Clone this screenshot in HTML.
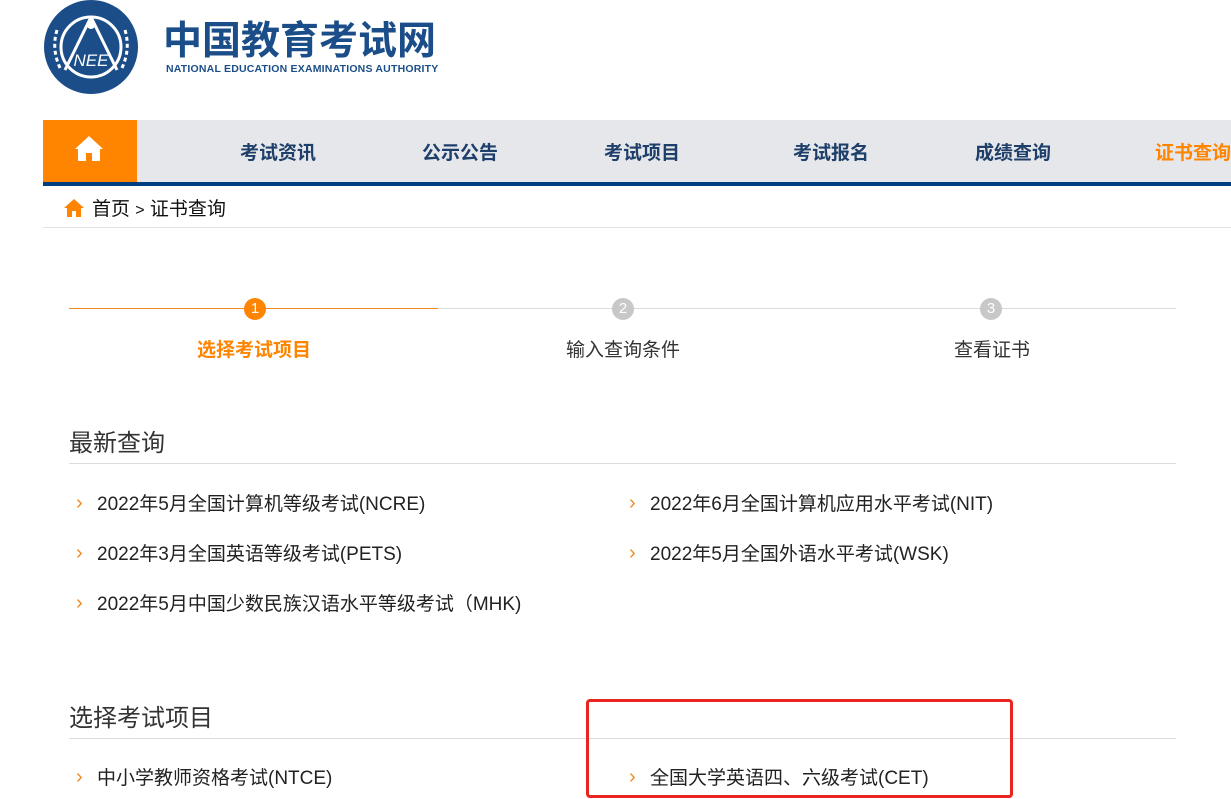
<!DOCTYPE html>
<html><head><meta charset="utf-8"><style>
*{margin:0;padding:0;box-sizing:border-box}
body{width:1231px;height:799px;overflow:hidden;background:#fff;font-family:"Liberation Sans","Noto Sans CJK SC",sans-serif;position:relative;color:#222}
.a{position:absolute;white-space:nowrap}
.nav{position:absolute;left:43px;top:120px;width:1188px;height:62px;background:#e6e7eb}
.navb{position:absolute;left:43px;top:182px;width:1188px;height:4px;background:#003f7f}
.ni{position:absolute;top:138px;font-size:19px;font-weight:bold;color:#1f3f6b;transform:translateX(-50%)}
.circ{position:absolute;top:298px;width:22px;height:22px;border-radius:50%;color:#fff;font-size:15px;text-align:center;line-height:22px}
.li{position:absolute;font-size:19px;color:#222}
.li:before{content:"›";color:#f08a24;position:absolute;left:-21px;top:3px;font-size:20px}
</style></head><body>
<svg class="a" style="left:43px;top:0" width="96" height="96" viewBox="0 0 96 96">
<circle cx="48" cy="47" r="47" fill="#1b4e89"/>
<circle cx="48" cy="47" r="30" fill="none" stroke="#fff" stroke-width="3"/>
<path d="M48 17 L22 70 M48 17 L74 70" stroke="#fff" stroke-width="3" fill="none"/>
<circle cx="48" cy="25" r="4" fill="#fff"/>
<text x="48" y="66" text-anchor="middle" font-size="17" fill="#fff" font-family="Liberation Sans" font-style="italic">NEE</text>
<path d="M14 30 Q8 50 18 70 M82 30 Q88 50 78 70" stroke="#fff" stroke-width="3" fill="none" stroke-dasharray="4 3"/>
</svg>
<div class="a" style="left:163px;top:10px;font-size:39px;font-weight:bold;color:#1b4e89;letter-spacing:0px">中国教育考试网</div>
<div class="a" style="left:166px;top:63px;font-size:10.5px;font-weight:bold;color:#1b4e89;letter-spacing:0.2px">NATIONAL EDUCATION EXAMINATIONS AUTHORITY</div>
<div class="nav"></div><div class="navb"></div>
<div class="a" style="left:43px;top:120px;width:94px;height:62px;background:#ff8400"></div>
<svg class="a" style="left:73px;top:134px" width="32" height="28" viewBox="0 0 32 28"><path d="M16 2 L2 15 L5 15 L5 27 L13 27 L13 19 L19 19 L19 27 L27 27 L27 15 L30 15 Z" fill="#fff"/></svg>
<div class="ni" style="left:278px">考试资讯</div>
<div class="ni" style="left:460px">公示公告</div>
<div class="ni" style="left:642px">考试项目</div>
<div class="ni" style="left:831px">考试报名</div>
<div class="ni" style="left:1013px">成绩查询</div>
<div class="ni" style="left:1155px;transform:none;color:#ff8400">证书查询</div>
<svg class="a" style="left:63px;top:198px" width="22" height="20" viewBox="0 0 22 20"><path d="M11 1 L1 10 L4 10 L4 19 L9 19 L9 13 L13 13 L13 19 L18 19 L18 10 L21 10 Z" fill="#ff8400"/></svg>
<div class="a" style="left:92px;top:194px;font-size:19px;color:#111">首页 <span style="font-size:16px">&gt;</span> 证书查询</div>
<div class="a" style="left:43px;top:227px;width:1188px;height:1px;background:#e2e2e2"></div>
<div class="a" style="left:69px;top:308px;width:369px;height:1px;background:#f08a24"></div>
<div class="a" style="left:438px;top:308px;width:738px;height:1px;background:#dcdcdc"></div>
<div class="circ" style="left:244px;background:#ff8400">1</div>
<div class="circ" style="left:612px;background:#c8c8c8">2</div>
<div class="circ" style="left:980px;background:#c8c8c8">3</div>
<div class="a" style="left:197px;top:335px;font-size:19px;font-weight:bold;color:#ff8400">选择考试项目</div>
<div class="a" style="left:566px;top:335px;font-size:19px;color:#333">输入查询条件</div>
<div class="a" style="left:954px;top:335px;font-size:19px;color:#333">查看证书</div>
<div class="a" style="left:69px;top:423px;font-size:24px;color:#333">最新查询</div>
<div class="a" style="left:69px;top:463px;width:1107px;height:1px;background:#dcdcdc"></div>
<div class="li" style="left:97px;top:489px">2022年5月全国计算机等级考试(NCRE)</div>
<div class="li" style="left:650px;top:489px">2022年6月全国计算机应用水平考试(NIT)</div>
<div class="li" style="left:97px;top:539px">2022年3月全国英语等级考试(PETS)</div>
<div class="li" style="left:650px;top:539px">2022年5月全国外语水平考试(WSK)</div>
<div class="li" style="left:97px;top:589px">2022年5月中国少数民族汉语水平等级考试（MHK)</div>
<div class="a" style="left:69px;top:698px;font-size:24px;color:#333">选择考试项目</div>
<div class="a" style="left:69px;top:738px;width:1107px;height:1px;background:#dcdcdc"></div>
<div class="li" style="left:97px;top:763px">中小学教师资格考试(NTCE)</div>
<div class="li" style="left:650px;top:763px">全国大学英语四、六级考试(CET)</div>
<div class="a" style="left:586px;top:699px;width:427px;height:99px;border:3px solid #e8261f;border-radius:4px"></div>
</body></html>
